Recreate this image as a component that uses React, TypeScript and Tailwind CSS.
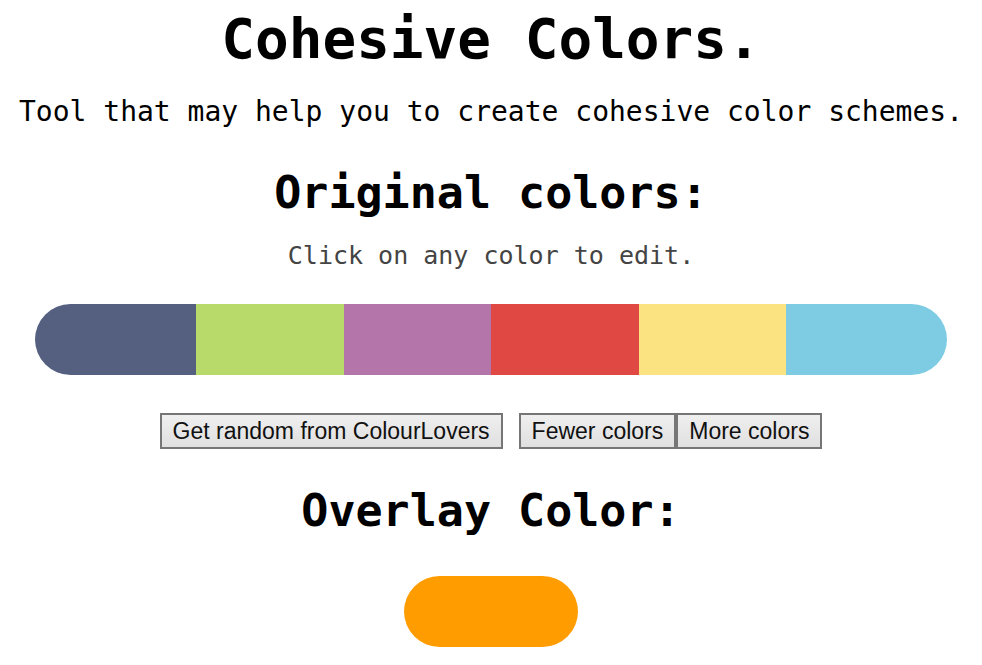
import React from "react";

const mono = { fontFamily: '"DejaVu Sans Mono", "Liberation Mono", monospace' };

export default function App() {
  const btn =
    "h-[36px] border-2 border-[#767676] bg-gradient-to-b from-[#efefef] to-[#e0e0e0] px-[11px] text-[23px] leading-[26px] text-[#111] font-['Liberation_Sans',Arial,sans-serif]";
  return (
    <div className="w-[982px] min-h-[665px] bg-white text-black flex flex-col items-center" style={mono}>
      <h1 className="mt-[7px] text-[56px] leading-[64px] font-bold whitespace-nowrap">Cohesive Colors.</h1>
      <p className="mt-[23px] text-[28px] leading-[36px] whitespace-nowrap">
        Tool that may help you to create cohesive color schemes.
      </p>
      <h2 className="mt-[37px] text-[45px] leading-[52px] font-bold whitespace-nowrap">Original colors:</h2>
      <p className="mt-[21px] text-[25px] leading-[32px] text-[#444] whitespace-nowrap">Click on any color to edit.</p>
      <div className="mt-[32px] flex h-[71px] w-[912px] self-start ml-[35px] overflow-hidden rounded-full">
        <div className="w-[161px] bg-[#556080]" />
        <div className="flex-1 bg-[#b8da6b]" />
        <div className="flex-1 bg-[#b375aa]" />
        <div className="flex-1 bg-[#e04844]" />
        <div className="flex-1 bg-[#fce381]" />
        <div className="w-[161px] bg-[#7ecbe4]" />
      </div>
      <div className="mt-[38px] flex items-center gap-[16px]">
        <button className={btn}>Get random from ColourLovers</button>
        <div className="flex">
          <button className={btn}>Fewer colors</button>
          <button className={btn}>More colors</button>
        </div>
      </div>
      <h2 className="mt-[36px] text-[45px] leading-[52px] font-bold whitespace-nowrap">Overlay Color:</h2>
      <div className="mt-[39px] h-[71px] w-[174px] rounded-full bg-[#ff9c00]" />
    </div>
  );
}
